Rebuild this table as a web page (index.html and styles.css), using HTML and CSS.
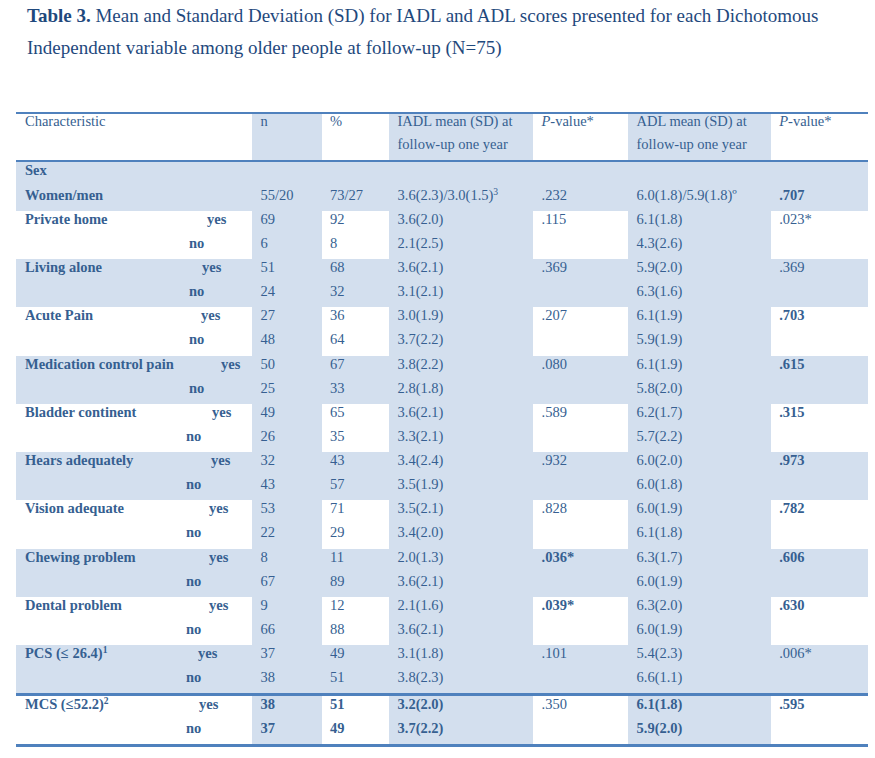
FILE: index.html
```html
<!DOCTYPE html>
<html>
<head>
<meta charset="utf-8">
<link rel="stylesheet" href="styles.css">
</head>
<body>
<p class="title"><b>Table 3.</b> Mean and Standard Deviation (SD) for IADL and ADL scores presented for each Dichotomous Independent variable among older people at follow-up (N=75)</p>
<table class="t">
  <colgroup>
    <col class="c1"><col class="c2"><col class="c3"><col class="c4"><col class="c5"><col class="c6"><col class="c7">
  </colgroup>
  <thead>
    <tr>
      <th><div class="hd">Characteristic</div></th>
      <th><div class="hd">n</div></th>
      <th><div class="hd">%</div></th>
      <th><div class="hd">IADL mean (SD) at follow-up one year</div></th>
      <th><div class="hd"><i>P</i>-value*</div></th>
      <th><div class="hd">ADL mean (SD) at follow-up one year</div></th>
      <th><div class="hd"><i>P</i>-value*</div></th>
    </tr>
  </thead>
  <tbody class="band">
    <tr><td><b>Sex</b></td><td></td><td></td><td></td><td></td><td></td><td></td></tr>
    <tr><td><b>Women/men</b></td><td>55/20</td><td>73/27</td><td>3.6(2.3)/3.0(1.5)<sup>3</sup></td><td>.232</td><td>6.0(1.8)/5.9(1.8)º</td><td><b>.707</b></td></tr>
  </tbody>
  <tbody class="plain">
    <tr><td><div class="ch"><b>Private home</b><b class="yn m182">yes</b></div></td><td>69</td><td>92</td><td>3.6(2.0)</td><td>.115</td><td>6.1(1.8)</td><td>.023*</td></tr>
    <tr><td><div class="ch"><b class="yn m164">no</b></div></td><td>6</td><td>8</td><td>2.1(2.5)</td><td></td><td>4.3(2.6)</td><td></td></tr>
  </tbody>
  <tbody class="band">
    <tr><td><div class="ch"><b>Living alone</b><b class="yn m177">yes</b></div></td><td>51</td><td>68</td><td>3.6(2.1)</td><td>.369</td><td>5.9(2.0)</td><td>.369</td></tr>
    <tr><td><div class="ch"><b class="yn m164">no</b></div></td><td>24</td><td>32</td><td>3.1(2.1)</td><td></td><td>6.3(1.6)</td><td></td></tr>
  </tbody>
  <tbody class="plain">
    <tr><td><div class="ch"><b>Acute Pain</b><b class="yn m176">yes</b></div></td><td>27</td><td>36</td><td>3.0(1.9)</td><td>.207</td><td>6.1(1.9)</td><td><b>.703</b></td></tr>
    <tr><td><div class="ch"><b class="yn m164">no</b></div></td><td>48</td><td>64</td><td>3.7(2.2)</td><td></td><td>5.9(1.9)</td><td></td></tr>
  </tbody>
  <tbody class="band">
    <tr><td><div class="ch"><b>Medication control pain</b><b class="yn m196">yes</b></div></td><td>50</td><td>67</td><td>3.8(2.2)</td><td>.080</td><td>6.1(1.9)</td><td><b>.615</b></td></tr>
    <tr><td><div class="ch"><b class="yn m164">no</b></div></td><td>25</td><td>33</td><td>2.8(1.8)</td><td></td><td>5.8(2.0)</td><td></td></tr>
  </tbody>
  <tbody class="plain">
    <tr><td><div class="ch"><b>Bladder continent</b><b class="yn m187">yes</b></div></td><td>49</td><td>65</td><td>3.6(2.1)</td><td>.589</td><td>6.2(1.7)</td><td><b>.315</b></td></tr>
    <tr><td><div class="ch"><b class="yn m161">no</b></div></td><td>26</td><td>35</td><td>3.3(2.1)</td><td></td><td>5.7(2.2)</td><td></td></tr>
  </tbody>
  <tbody class="band">
    <tr><td><div class="ch"><b>Hears adequately</b><b class="yn m186">yes</b></div></td><td>32</td><td>43</td><td>3.4(2.4)</td><td>.932</td><td>6.0(2.0)</td><td><b>.973</b></td></tr>
    <tr><td><div class="ch"><b class="yn m161">no</b></div></td><td>43</td><td>57</td><td>3.5(1.9)</td><td></td><td>6.0(1.8)</td><td></td></tr>
  </tbody>
  <tbody class="plain">
    <tr><td><div class="ch"><b>Vision adequate</b><b class="yn m184">yes</b></div></td><td>53</td><td>71</td><td>3.5(2.1)</td><td>.828</td><td>6.0(1.9)</td><td><b>.782</b></td></tr>
    <tr><td><div class="ch"><b class="yn m161">no</b></div></td><td>22</td><td>29</td><td>3.4(2.0)</td><td></td><td>6.1(1.8)</td><td></td></tr>
  </tbody>
  <tbody class="band">
    <tr><td><div class="ch"><b>Chewing problem</b><b class="yn m184">yes</b></div></td><td>8</td><td>11</td><td>2.0(1.3)</td><td><b>.036*</b></td><td>6.3(1.7)</td><td><b>.606</b></td></tr>
    <tr><td><div class="ch"><b class="yn m161">no</b></div></td><td>67</td><td>89</td><td>3.6(2.1)</td><td></td><td>6.0(1.9)</td><td></td></tr>
  </tbody>
  <tbody class="plain">
    <tr><td><div class="ch"><b>Dental problem</b><b class="yn m184">yes</b></div></td><td>9</td><td>12</td><td>2.1(1.6)</td><td><b>.039*</b></td><td>6.3(2.0)</td><td><b>.630</b></td></tr>
    <tr><td><div class="ch"><b class="yn m161">no</b></div></td><td>66</td><td>88</td><td>3.6(2.1)</td><td></td><td>6.0(1.9)</td><td></td></tr>
  </tbody>
  <tbody class="band">
    <tr><td><div class="ch"><b>PCS (≤ 26.4)<sup>1</sup></b><b class="yn m173">yes</b></div></td><td>37</td><td>49</td><td>3.1(1.8)</td><td>.101</td><td>5.4(2.3)</td><td>.006*</td></tr>
    <tr><td><div class="ch"><b class="yn m161">no</b></div></td><td>38</td><td>51</td><td>3.8(2.3)</td><td></td><td>6.6(1.1)</td><td></td></tr>
  </tbody>
  <tbody class="plain last">
    <tr><td><div class="ch"><b>MCS (≤52.2)<sup>2</sup></b><b class="yn m174">yes</b></div></td><td><b>38</b></td><td><b>51</b></td><td><b>3.2(2.0)</b></td><td>.350</td><td><b>6.1(1.8)</b></td><td><b>.595</b></td></tr>
    <tr><td><div class="ch"><b class="yn m161">no</b></div></td><td><b>37</b></td><td><b>49</b></td><td><b>3.7(2.2)</b></td><td></td><td><b>5.9(2.0)</b></td><td></td></tr>
  </tbody>
</table>
</body>
</html>
```

FILE: styles.css
```css
html, body {
  margin: 0;
  padding: 0;
  background: #ffffff;
}

body {
  font-family: "Liberation Serif", "Times New Roman", serif;
}

.title {
  margin: 0;
  padding: 0 0 0 27px;
  width: 830px;
  font-size: 19px;
  line-height: 31.6px;
  color: #1f497d;
}

.t {
  margin: 49px 0 0 16px;
  width: 852px;
  table-layout: fixed;
  border-collapse: collapse;
  font-size: 14.5px;
  color: #365f91;
}

.c1 { width: 236px; }
.c2 { width: 69.5px; }
.c3 { width: 67.5px; }
.c4 { width: 144px; }
.c5 { width: 95px; }
.c6 { width: 142.7px; }
.c7 { width: 97.3px; }

.t thead tr {
  border-top: 2px solid #4f81bd;
  border-bottom: 2px solid #4f81bd;
}

.t th {
  font-weight: normal;
  text-align: left;
  vertical-align: top;
  padding: 0 6px 0 8.5px;
  height: 46.2px;
}

.t th:first-child { padding-left: 9px; }

.hd {
  line-height: 23px;
  margin-top: -4px;
}

.t td {
  vertical-align: top;
  text-align: left;
  padding: 0 6px 6.55px 8.5px;
  line-height: 17.6px;
  height: 17.6px;
  white-space: nowrap;
}

.t td:first-child { padding-left: 9px; }

.t thead th:nth-child(2),
.t thead th:nth-child(4),
.t thead th:nth-child(6),
.plain td:nth-child(2),
.plain td:nth-child(4),
.plain td:nth-child(6) {
  background: #d3dfee;
}

.band td {
  background: #d3dfee;
}

.t tbody.last {
  border-top: 3px solid #4f81bd;
  border-bottom: 3px solid #4f81bd;
}

.t tbody.last td {
  line-height: 17px;
  height: 17px;
}

.ch {
  display: grid;
}

.ch > * {
  grid-area: 1 / 1;
  white-space: nowrap;
}

.m161 { margin-left: 161px; }
.m164 { margin-left: 164px; }
.m173 { margin-left: 173px; }
.m174 { margin-left: 174px; }
.m176 { margin-left: 176px; }
.m177 { margin-left: 177px; }
.m182 { margin-left: 182px; }
.m184 { margin-left: 184px; }
.m186 { margin-left: 186px; }
.m187 { margin-left: 187px; }
.m196 { margin-left: 196px; }

sup {
  font-size: 0.66em;
  line-height: 0;
  vertical-align: 0.5em;
}
```
